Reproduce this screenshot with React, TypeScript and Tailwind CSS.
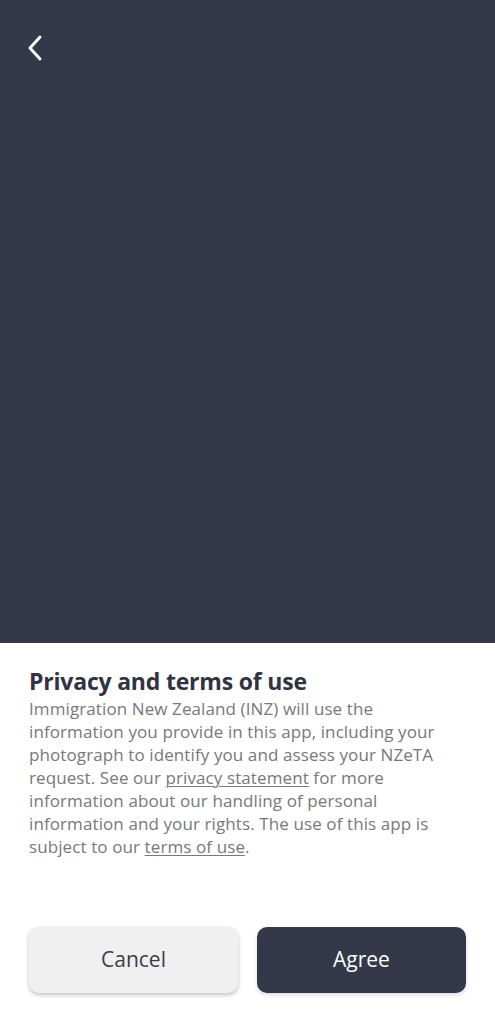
export default function App() {
  return (
    <div className="flex h-[1024px] w-[495px] flex-col bg-white font-['Open_Sans',sans-serif]">
      <div className="h-[643px] shrink-0 bg-[#343848] pl-[25px] pt-[34px]">
        <button aria-label="Back" className="block h-[28px] w-[22px]">
          <svg width="22" height="28" viewBox="0 0 22 28" fill="none">
            <path d="M15 3 L5 14 L15 25" stroke="white" strokeWidth="3" strokeLinecap="round" strokeLinejoin="round" />
          </svg>
        </button>
      </div>

      <div className="px-[29px] pt-[23px]">
        <h1 className="text-[23px] font-bold leading-[31px] tracking-[-0.2px] text-[#2f3342]">Privacy and terms of use</h1>
        <p className="text-[17px] leading-[23px] tracking-[0.1px] text-[#77787c]">
          Immigration New Zealand (INZ) will use the information you provide in this app, including your
          photograph to identify you and assess your NZeTA request. See our{' '}
          <a className="underline decoration-1 underline-offset-2">privacy statement</a> for more
          information about our handling of personal information and your rights. The use of this app is
          subject to our <a className="underline decoration-1 underline-offset-2">terms of use</a>.
        </p>
      </div>

      <div className="mt-auto flex gap-[19px] px-[29px] pb-[31px]">
        <button className="h-[66px] flex-1 rounded-[10px] bg-[#f0f0f0] text-[21px] text-[#3a3d4a] shadow-[0_2px_4px_rgba(0,0,0,0.25)]">
          Cancel
        </button>
        <button className="h-[66px] flex-1 rounded-[10px] bg-[#343848] text-[21px] text-white shadow-[0_2px_4px_rgba(0,0,0,0.15)]">
          Agree
        </button>
      </div>
    </div>
  )
}
